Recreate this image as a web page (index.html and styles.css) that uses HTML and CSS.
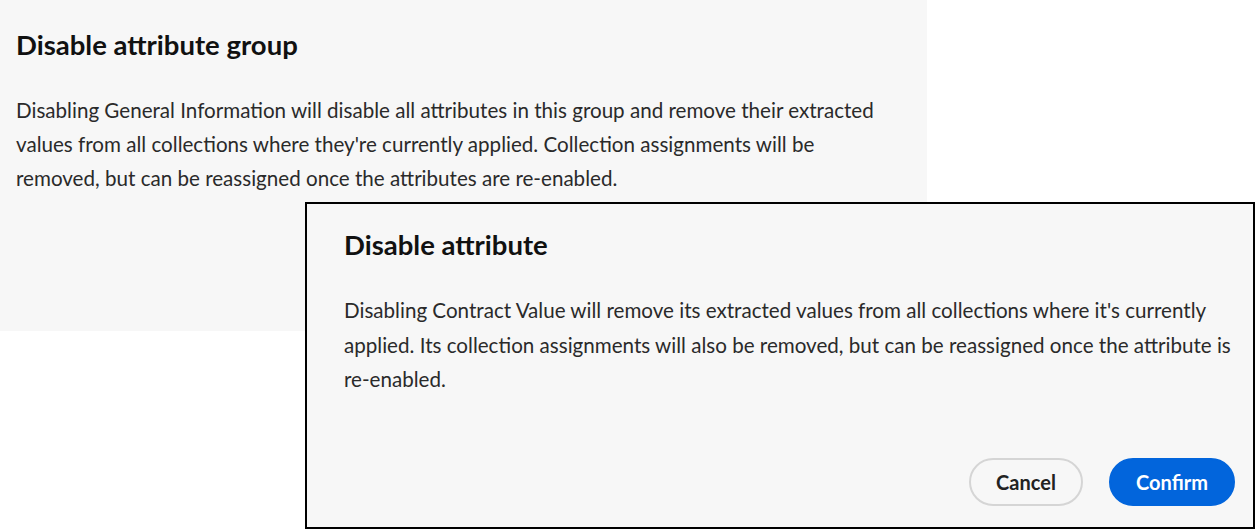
FILE: index.html
```html
<!DOCTYPE html>
<html lang="en">
<head>
<meta charset="utf-8">
<title>Disable attribute</title>
<link rel="stylesheet" href="styles.css">
</head>
<body>
<div class="stage">
  <section class="dialog dialog-group">
    <h2 class="dialog-title">Disable attribute group</h2>
    <p class="dialog-body">Disabling General Information will disable all attributes in this group and remove their extracted<br>values from all collections where they're currently applied. Collection assignments will be<br>removed, but can be reassigned once the attributes are re-enabled.</p>
  </section>
  <section class="dialog dialog-attr">
    <h2 class="dialog-title">Disable attribute</h2>
    <p class="dialog-body">Disabling Contract Value will remove its extracted values from all collections where it's currently<br>applied. Its collection assignments will also be removed, but can be reassigned once the attribute is<br>re-enabled.</p>
    <div class="dialog-actions">
      <button class="btn btn-secondary" type="button">Cancel</button>
      <button class="btn btn-primary" type="button">Confirm</button>
    </div>
  </section>
</div>
</body>
</html>
```
FILE: styles.css
```css
html, body {
  margin: 0;
  padding: 0;
  background: #ffffff;
}

body {
  font-family: Lato, "Open Sans", "Liberation Sans", sans-serif;
  color: #222222;
  width: 1255px;
  height: 529px;
  overflow: hidden;
}

.stage {
  position: relative;
  width: 1255px;
  height: 529px;
}

.dialog {
  background: #f7f7f7;
  box-sizing: border-box;
}

.dialog-group {
  width: 927px;
  height: 331px;
  padding: 28px 16px 0 16px;
}

.dialog-attr {
  position: absolute;
  left: 305px;
  top: 202px;
  width: 950px;
  height: 327px;
  border: 2px solid #000000;
  padding: 24px 18px 21px 37px;
  display: flex;
  flex-direction: column;
}

.dialog-title {
  margin: 0;
  font-size: 27.5px;
  line-height: 34px;
  font-weight: 700;
  color: #111111;
}

.dialog-body {
  margin: 0;
  font-size: 20.6px;
  line-height: 34px;
  color: #2a2a2a;
  white-space: nowrap;
}

.dialog-group .dialog-body {
  margin-top: 31px;
}

.dialog-attr .dialog-body {
  margin-top: 31px;
  line-height: 34.5px;
}

.dialog-actions {
  margin-top: auto;
  display: flex;
  justify-content: flex-end;
  gap: 26px;
}

.btn {
  font-family: inherit;
  font-size: 20px;
  font-weight: 700;
  height: 48px;
  border-radius: 24px;
  box-sizing: border-box;
  cursor: pointer;
}

.btn-secondary {
  width: 114px;
  background: transparent;
  border: 2px solid #d5d5d5;
  color: #222222;
}

.btn-primary {
  width: 126px;
  background: #0265dc;
  border: 2px solid #0265dc;
  color: #ffffff;
}
```
